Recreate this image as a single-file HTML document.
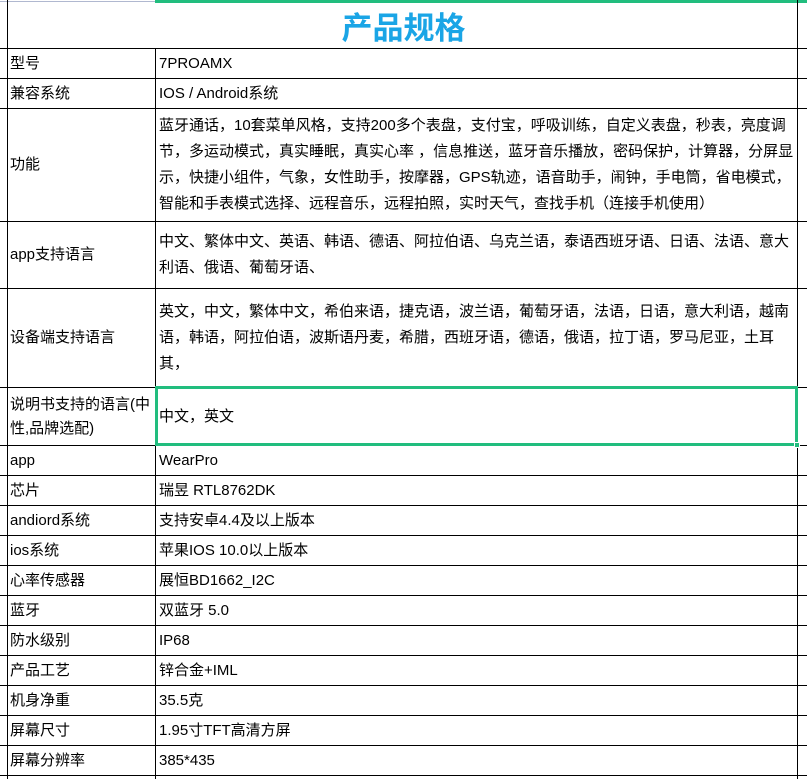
<!DOCTYPE html>
<html><head><meta charset="utf-8"><style>
*{margin:0;padding:0;box-sizing:border-box}
body{width:807px;height:779px;background:#fff;position:relative;overflow:hidden;font-family:"Liberation Sans","Noto Sans CJK SC",sans-serif;font-size:15px;color:#000}
.h{position:absolute;left:0;width:807px;height:1px;background:#000}
.v{position:absolute;top:0;width:1px;height:779px;background:#000}
.c{position:absolute;display:flex;align-items:center;white-space:nowrap;line-height:26px}
.l{left:10px;width:145px}
.r{left:159px;width:640px}
</style></head><body>
<div style="position:absolute;left:0;top:1px;width:155px;height:1px;background:#b0b8d0"></div>
<div style="position:absolute;left:155px;top:0;width:652px;height:3px;background:#21bd7e"></div>
<div class="v" style="left:7px"></div>
<div class="v" style="left:155px;top:48px;height:731px"></div>
<div class="v" style="left:797px"></div>
<div style="position:absolute;left:155px;top:6px;width:497px;text-align:center;font-size:31px;font-weight:bold;color:#1aa5e6;font-family:'Noto Sans CJK SC',sans-serif;line-height:40px">产品规格</div>

<div class="h" style="top:48px"></div>
<div class="h" style="top:78px"></div>
<div class="h" style="top:108px"></div>
<div class="h" style="top:221px"></div>
<div class="h" style="top:288px"></div>
<div class="h" style="top:387px"></div>
<div class="h" style="top:445px"></div>
<div class="h" style="top:475px"></div>
<div class="h" style="top:505px"></div>
<div class="h" style="top:535px"></div>
<div class="h" style="top:565px"></div>
<div class="h" style="top:595px"></div>
<div class="h" style="top:625px"></div>
<div class="h" style="top:655px"></div>
<div class="h" style="top:685px"></div>
<div class="h" style="top:715px"></div>
<div class="h" style="top:745px"></div>
<div class="h" style="top:775px"></div>

<div class="c l" style="top:49px;height:29px">型号</div><div class="c r" style="top:49px;height:29px">7PROAMX</div>
<div class="c l" style="top:79px;height:29px">兼容系统</div><div class="c r" style="top:79px;height:29px">IOS / Android系统</div>
<div class="c l" style="top:109px;height:112px">功能</div>
<div class="c r" style="top:109px;height:112px">蓝牙通话，10套菜单风格，支持200多个表盘，支付宝，呼吸训练，自定义表盘，秒表，亮度调<br>节，多运动模式，真实睡眠，真实心率 ，信息推送，蓝牙音乐播放，密码保护，计算器，分屏显<br>示，快捷小组件，气象，女性助手，按摩器，GPS轨迹，语音助手，闹钟，手电筒，省电模式，<br>智能和手表模式选择、远程音乐，远程拍照，实时天气，查找手机（连接手机使用）</div>
<div class="c l" style="top:222px;height:66px">app支持语言</div>
<div class="c r" style="top:222px;height:66px">中文、繁体中文、英语、韩语、德语、阿拉伯语、乌克兰语，泰语西班牙语、日语、法语、意大<br>利语、俄语、葡萄牙语、</div>
<div class="c l" style="top:289px;height:98px">设备端支持语言</div>
<div class="c r" style="top:289px;height:98px">英文，中文，繁体中文，希伯来语，捷克语，波兰语，葡萄牙语，法语，日语，意大利语，越南<br>语，韩语，阿拉伯语，波斯语丹麦，希腊，西班牙语，德语，俄语，拉丁语，罗马尼亚，土耳<br>其，</div>
<div class="c l" style="top:388px;height:57px;line-height:24px">说明书支持的语言(中<br>性,品牌选配)</div>
<div class="c r" style="top:388px;height:57px">中文，英文</div>
<div style="position:absolute;left:155px;top:386px;width:643px;height:60px;border:3px solid #21bd7e"></div>
<div style="position:absolute;left:794px;top:442px;width:6px;height:6px;background:#21bd7e;border:1px solid #fff"></div>
<div class="c l" style="top:446px;height:29px">app</div><div class="c r" style="top:446px;height:29px">WearPro</div>
<div class="c l" style="top:476px;height:29px">芯片</div><div class="c r" style="top:476px;height:29px">瑞昱 RTL8762DK</div>
<div class="c l" style="top:506px;height:29px">andiord系统</div><div class="c r" style="top:506px;height:29px">支持安卓4.4及以上版本</div>
<div class="c l" style="top:536px;height:29px">ios系统</div><div class="c r" style="top:536px;height:29px">苹果IOS 10.0以上版本</div>
<div class="c l" style="top:566px;height:29px">心率传感器</div><div class="c r" style="top:566px;height:29px">展恒BD1662_I2C</div>
<div class="c l" style="top:596px;height:29px">蓝牙</div><div class="c r" style="top:596px;height:29px">双蓝牙 5.0</div>
<div class="c l" style="top:626px;height:29px">防水级别</div><div class="c r" style="top:626px;height:29px">IP68</div>
<div class="c l" style="top:656px;height:29px">产品工艺</div><div class="c r" style="top:656px;height:29px">锌合金+IML</div>
<div class="c l" style="top:686px;height:29px">机身净重</div><div class="c r" style="top:686px;height:29px">35.5克</div>
<div class="c l" style="top:716px;height:29px">屏幕尺寸</div><div class="c r" style="top:716px;height:29px">1.95寸TFT高清方屏</div>
<div class="c l" style="top:746px;height:29px">屏幕分辨率</div><div class="c r" style="top:746px;height:29px">385*435</div>
</body></html>
